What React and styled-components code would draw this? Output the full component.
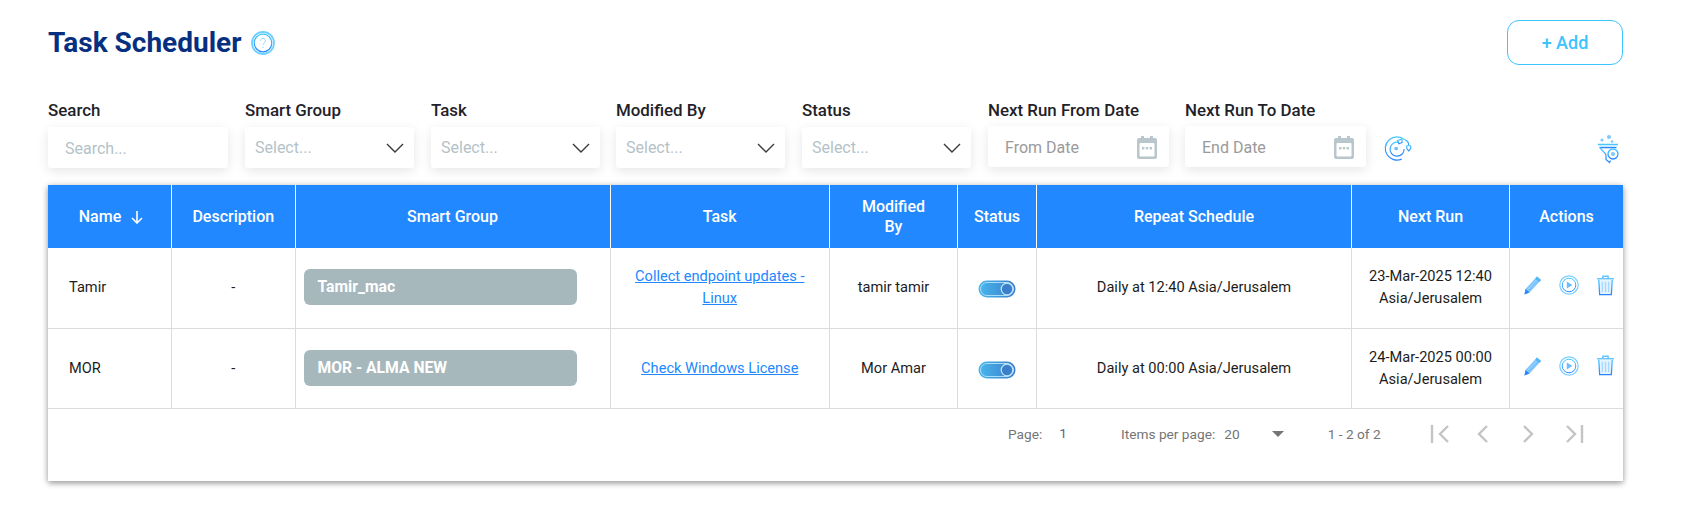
import React from "react";
import styled, { createGlobalStyle } from "styled-components";

const GlobalStyle = createGlobalStyle`
  html, body {
    margin: 0;
    padding: 0;
    background: #fff;
    font-family: Roboto, "Liberation Sans", sans-serif;
  }
`;

const Page = styled.div`
  width: 1683px;
  height: 517px;
  box-sizing: border-box;
  padding: 20px 60px 0 48px;
  overflow: hidden;
`;
const TitleRow = styled.div`
  display: flex;
  align-items: center;
  justify-content: space-between;
  height: 45px;
`;
const TitleGroup = styled.div`
  display: flex;
  align-items: center;
  gap: 10px;
`;
const Title = styled.h1`
  margin: 0;
  font-size: 28px;
  font-weight: 700;
  color: #06307f;
`;
const AddButton = styled.button`
  width: 116px;
  height: 45px;
  background: #fff;
  border: 1px solid #3cc4ff;
  border-radius: 12px;
  color: #3cc4ff;
  font-family: inherit;
  font-size: 18px;
  font-weight: 500;
`;
const Filters = styled.div`
  display: flex;
  align-items: flex-end;
  margin-top: 35px;
  height: 68px;
`;
const Field = styled.div`
  display: flex;
  flex-direction: column;
  width: ${(p) => p.$width}px;
  margin-right: ${(p) => p.$gap}px;
  margin-bottom: ${(p) => (p.$lift ? "1px" : "0")};
`;
const FieldLabel = styled.label`
  font-size: 16.9px;
  font-weight: 500;
  line-height: 20px;
  color: #1f2229;
  margin-bottom: ${(p) => (p.$lift ? "6px" : "7px")};
  white-space: nowrap;
`;
const Control = styled.div`
  display: flex;
  align-items: center;
  justify-content: space-between;
  height: 41px;
  box-sizing: border-box;
  padding: ${(p) => (p.$drop ? "2px" : "0")} ${(p) => p.$right}px 0 ${(p) => p.$left}px;
  background: #fff;
  border-radius: 3px;
  box-shadow: 0 3px 12px rgba(0, 0, 0, 0.1);
  font-size: 16px;
  color: ${(p) => p.$color};
`;
const ResetSlot = styled.div`
  display: flex;
  align-items: center;
  height: 41px;
  flex: 1;
  padding: 2px 0 0 1px;
  box-sizing: border-box;
`;
const FunnelSlot = styled.div`
  display: flex;
  align-items: center;
  height: 41px;
  margin-right: 2px;
  padding-top: 2px;
  box-sizing: border-box;
`;
const Card = styled.div`
  margin-top: 17px;
  height: 296px;
  background: #fff;
  box-shadow: 0 2px 6px rgba(0, 0, 0, 0.4), 0 0 8px rgba(0, 0, 0, 0.06);
`;
const columns = "124px 123.5px 315px 219.5px 128px 79px 315px 158px 113px";
const HeadRow = styled.div`
  display: grid;
  grid-template-columns: ${columns};
  height: 63px;
  background: #2188ff;
`;
const HeadCell = styled.div`
  display: flex;
  align-items: center;
  justify-content: center;
  gap: 9px;
  padding: 0 8px 0 ${(p) => (p.$sorted ? "12px" : "8px")};
  text-align: center;
  line-height: 20px;
  font-size: 16px;
  font-weight: 500;
  color: #fff;
  border-right: 1px solid #fff;
  &:last-child {
    border-right: 0;
  }
`;
const BodyRow = styled.div`
  display: grid;
  grid-template-columns: ${columns};
  height: 79.5px;
  border-bottom: 1px solid #dcdcdc;
`;
const Cell = styled.div`
  display: flex;
  align-items: center;
  justify-content: ${(p) => (p.$align === "center" ? "center" : "flex-start")};
  box-sizing: border-box;
  padding: 0 ${(p) => (p.$name ? "21px" : "8px")} 1px;
  text-align: center;
  font-size: 14.6px;
  line-height: 22px;
  color: #1c1c1c;
  border-right: 1px solid #dcdcdc;
  &:last-child {
    border-right: 0;
  }
`;
const GroupPill = styled.div`
  width: 273px;
  height: 36px;
  box-sizing: border-box;
  padding: 0 14px;
  display: flex;
  align-items: center;
  background: #a7b8bd;
  border-radius: 6px;
  color: #fff;
  font-size: 15.7px;
  font-weight: 700;
`;
const TaskLink = styled.a`
  color: #2188ff;
  text-decoration: underline;
  padding: 0 10px;
`;
const ToggleSlot = styled.div`
  display: flex;
  margin-top: 4px;
`;
const Actions = styled.div`
  display: flex;
  align-items: center;
  gap: 17px;
  margin: 0 0 4px 3px;
`;
const Pager = styled.div`
  display: flex;
  align-items: center;
  height: 50px;
  font-size: 13.7px;
  color: #757575;
`;
const PagerText = styled.span`
  margin-left: ${(p) => p.$left}px;
  white-space: nowrap;
`;
const PageNumber = styled.span`
  margin: 0 0 3px 17px;
  color: #4a6a80;
`;
const Caret = styled.span`
  margin-left: 32px;
  width: 0;
  height: 0;
  border-left: 6px solid transparent;
  border-right: 6px solid transparent;
  border-top: 6px solid #757575;
`;
const PagerIcon = styled.svg`
  margin-left: ${(p) => p.$left}px;
  fill: none;
  stroke: #c4c4c4;
  stroke-width: 2.4;
`;

function Gradient({ id }) {
  return (
    <defs>
      <linearGradient id={id} x1="0" y1="0" x2="0" y2="1">
        <stop offset="0" stopColor="#45c8ff" />
        <stop offset="1" stopColor="#2a86ff" />
      </linearGradient>
    </defs>
  );
}

function HelpIcon() {
  return (
    <svg width="24" height="24" viewBox="0 0 24 24" fill="none">
      <Gradient id="help" />
      <circle cx="12" cy="12" r="11" stroke="#6fd0ff" strokeWidth="1.8" />
      <circle cx="12" cy="12" r="8.800" stroke="url(#help)" strokeWidth="1.200" />
      <path d="M9.600 9.800a2.400 2.400 0 1 1 3.600 2.100c-.8.5-1.200 1-1.200 1.900" stroke="#8ed8ff" strokeWidth="1" />
      <circle cx="12" cy="16.400" r=".7" fill="#8ed8ff" />
    </svg>
  );
}

function ChevronDown() {
  return (
    <svg width="20" height="12" viewBox="0 0 20 12" fill="none">
      <path d="M2 2l8 8 8-8" stroke="#3a3a3a" strokeWidth="1.400" />
    </svg>
  );
}

function CalendarIcon() {
  return (
    <svg width="22" height="25" viewBox="0 0 22 25">
      <path d="M1 5a2 2 0 0 1 2-2h2V1h3v2h6V1h3v2h2a2 2 0 0 1 2 2v17a2 2 0 0 1-2 2H3a2 2 0 0 1-2-2z" fill="#b9c7cc" />
      <rect x="3.500" y="8" width="15" height="13.500" rx="1" fill="#fff" />
      <rect x="6" y="12" width="2.400" height="2.400" fill="#b9c7cc" />
      <rect x="9.800" y="12" width="2.400" height="2.400" fill="#b9c7cc" />
      <rect x="13.600" y="12" width="2.400" height="2.400" fill="#b9c7cc" />
    </svg>
  );
}

function ResetIcon() {
  return (
    <svg width="28" height="27" viewBox="0 0 30 28" fill="none">
      <Gradient id="reset" />
      <path d="M22 4.500A12.500 12.500 0 1 0 19 25.400" stroke="url(#reset)" strokeWidth="1.300" />
      <path d="M16 7.500a7.500 7.500 0 1 0 5.500 7" stroke="url(#reset)" strokeWidth="1.300" />
      <path d="M14.500 5.500l4.500-1.500.5 3.500-3.500 1.500z" stroke="url(#reset)" strokeWidth="1.200" />
      <circle cx="13" cy="14" r="2" fill="#6fbfff" />
      <path d="M22 4.500c3 1 4.500 3.500 4.500 6" stroke="url(#reset)" strokeWidth="1.200" />
      <path d="M24.400 11h4.200v3l-2.100 2.600-2.100-2.600z" stroke="url(#reset)" strokeWidth="1.200" />
    </svg>
  );
}

function FunnelIcon() {
  return (
    <svg width="24" height="30" viewBox="0 0 24 30" fill="none">
      <Gradient id="funnel" />
      <circle cx="5" cy="6" r="1.600" fill="#7cc8ff" />
      <circle cx="12" cy="3" r="2" fill="#7cc8ff" />
      <circle cx="15" cy="7.500" r="1.300" fill="#7cc8ff" />
      <path d="M1 10.500h20M2.500 13.500h17" stroke="url(#funnel)" strokeWidth="1.300" />
      <path d="M3 13.500c2 4 6 5 6 8v4l3.500 3 1-2" stroke="url(#funnel)" strokeWidth="1.300" />
      <circle cx="16" cy="20" r="5" stroke="url(#funnel)" strokeWidth="1.300" />
      <circle cx="16" cy="20" r="2" fill="#7cc8ff" />
    </svg>
  );
}

function ToggleOn() {
  return (
    <svg width="38" height="18" viewBox="0 0 38 18">
      <defs>
        <linearGradient id="toggle" x1="0" y1="0" x2="1" y2="0">
          <stop offset="0" stopColor="#48b8ee" />
          <stop offset="1" stopColor="#3a7cc8" />
        </linearGradient>
      </defs>
      <rect x="0.500" y="0.500" width="37" height="17" rx="8.500" fill="url(#toggle)" />
      <rect x="2.500" y="2.500" width="33" height="13" rx="6.500" fill="none" stroke="#a9dcf5" strokeWidth="1" />
      <circle cx="29" cy="9" r="5.800" fill="#3a7fcb" stroke="#c4e6f8" strokeWidth="1.200" />
    </svg>
  );
}

function PencilIcon() {
  return (
    <svg width="20" height="20" viewBox="0 0 20 20">
      <path d="M15 1.500l4 3.500L7.500 17.500l-5 2 1-5.500z" fill="#7cc4fb" />
      <path d="M15 1.500l4 3.500-1.800 2-4-3.500z" fill="#4cb8f8" />
      <path d="M3.500 14l4 3.500-5 2z" fill="#2a86ff" />
      <path d="M5.500 14.500L14.500 5" stroke="#a8dcff" strokeWidth=".8" />
    </svg>
  );
}

function PlayIcon() {
  return (
    <svg width="20" height="20" viewBox="0 0 20 20" fill="none">
      <Gradient id="play" />
      <circle cx="10" cy="10" r="9.200" stroke="#7bd0ff" strokeWidth="1.200" />
      <circle cx="10" cy="10" r="6.800" stroke="url(#play)" strokeWidth="1" />
      <path d="M7.800 6.600l5.600 3.400-5.600 3.400z" fill="#6dbcfb" />
    </svg>
  );
}

function TrashIcon() {
  return (
    <svg width="19" height="21" viewBox="0 0 18 20" fill="none">
      <Gradient id="trash" />
      <path d="M1 3.500h16M6.500 3V1.200h5V3" stroke="#66c4fb" strokeWidth="1.400" />
      <path d="M2.600 4.500l.8 14.200h11.200l.8-14.200" fill="#e6f4ff" stroke="url(#trash)" strokeWidth="1.200" />
      <path d="M6 6.500v10M9 6.500v10M12 6.500v10" stroke="#a9d8fd" strokeWidth="1.400" />
    </svg>
  );
}

function DownArrow() {
  return (
    <svg width="14" height="14" viewBox="0 0 14 14" fill="none">
      <path d="M7 1v12M2 8l5 5 5-5" stroke="#fff" strokeWidth="1.600" />
    </svg>
  );
}

const headers = [
  "Description",
  "Smart Group",
  "Task",
  <>Modified<br />By</>,
  "Status",
  "Repeat Schedule",
  "Next Run",
  "Actions",
];

const rows = [
  {
    name: "Tamir",
    group: "Tamir_mac",
    task: "Collect endpoint updates - Linux",
    by: "tamir tamir",
    repeat: "Daily at 12:40 Asia/Jerusalem",
    next: "23-Mar-2025 12:40 Asia/Jerusalem",
  },
  {
    name: "MOR",
    group: "MOR - ALMA NEW",
    task: "Check Windows License",
    by: "Mor Amar",
    repeat: "Daily at 00:00 Asia/Jerusalem",
    next: "24-Mar-2025 00:00 Asia/Jerusalem",
  },
];

const selects = [
  { label: "Smart Group", gap: 17 },
  { label: "Task", gap: 16 },
  { label: "Modified By", gap: 17 },
  { label: "Status", gap: 17 },
];

export default function App() {
  return (
    <Page>
      <GlobalStyle />
      <TitleRow>
        <TitleGroup>
          <Title>Task Scheduler</Title>
          <HelpIcon />
        </TitleGroup>
        <AddButton>+ Add</AddButton>
      </TitleRow>

      <Filters>
        <Field $width={180} $gap={17}>
          <FieldLabel>Search</FieldLabel>
          <Control $left={17} $right={10} $color="#b4c2c8" $drop>Search...</Control>
        </Field>
        {selects.map((s) => (
          <Field key={s.label} $width={169} $gap={s.gap}>
            <FieldLabel>{s.label}</FieldLabel>
            <Control $left={10} $right={9} $color="#b4c2c8">
              Select...
              <ChevronDown />
            </Control>
          </Field>
        ))}
        <Field $width={181} $gap={16} $lift>
          <FieldLabel $lift>Next Run From Date</FieldLabel>
          <Control $left={17} $right={11} $color="#9a9a9a" $drop>
            From Date
            <CalendarIcon />
          </Control>
        </Field>
        <Field $width={181} $gap={17} $lift>
          <FieldLabel $lift>Next Run To Date</FieldLabel>
          <Control $left={17} $right={11} $color="#9a9a9a" $drop>
            End Date
            <CalendarIcon />
          </Control>
        </Field>
        <ResetSlot>
          <ResetIcon />
        </ResetSlot>
        <FunnelSlot>
          <FunnelIcon />
        </FunnelSlot>
      </Filters>

      <Card>
        <HeadRow>
          <HeadCell $sorted>
            Name <DownArrow />
          </HeadCell>
          {headers.map((h, i) => (
            <HeadCell key={i}>
              <span>{h}</span>
            </HeadCell>
          ))}
        </HeadRow>
        {rows.map((r) => (
          <BodyRow key={r.name}>
            <Cell $name>{r.name}</Cell>
            <Cell $align="center">-</Cell>
            <Cell>
              <GroupPill>{r.group}</GroupPill>
            </Cell>
            <Cell $align="center">
              <TaskLink href="#">{r.task}</TaskLink>
            </Cell>
            <Cell $align="center">{r.by}</Cell>
            <Cell $align="center">
              <ToggleSlot>
                <ToggleOn />
              </ToggleSlot>
            </Cell>
            <Cell $align="center">{r.repeat}</Cell>
            <Cell $align="center">{r.next}</Cell>
            <Cell $align="center">
              <Actions>
                <PencilIcon />
                <PlayIcon />
                <TrashIcon />
              </Actions>
            </Cell>
          </BodyRow>
        ))}
        <Pager>
          <PagerText $left={960}>Page:</PagerText>
          <PageNumber>1</PageNumber>
          <PagerText $left={54}>Items per page:</PagerText>
          <PagerText $left={9}>20</PagerText>
          <Caret />
          <PagerText $left={44}>1 - 2 of 2</PagerText>
          <PagerIcon $left={49} width="20" height="20" viewBox="0 0 20 20">
            <path d="M2 1v18M18 2l-8 8 8 8" />
          </PagerIcon>
          <PagerIcon $left={24} width="16" height="20" viewBox="0 0 16 20">
            <path d="M13 2l-8 8 8 8" />
          </PagerIcon>
          <PagerIcon $left={31} width="16" height="20" viewBox="0 0 16 20">
            <path d="M3 2l8 8-8 8" />
          </PagerIcon>
          <PagerIcon $left={28} width="20" height="20" viewBox="0 0 20 20">
            <path d="M2 2l8 8-8 8M17 1v18" />
          </PagerIcon>
        </Pager>
      </Card>
    </Page>
  );
}
